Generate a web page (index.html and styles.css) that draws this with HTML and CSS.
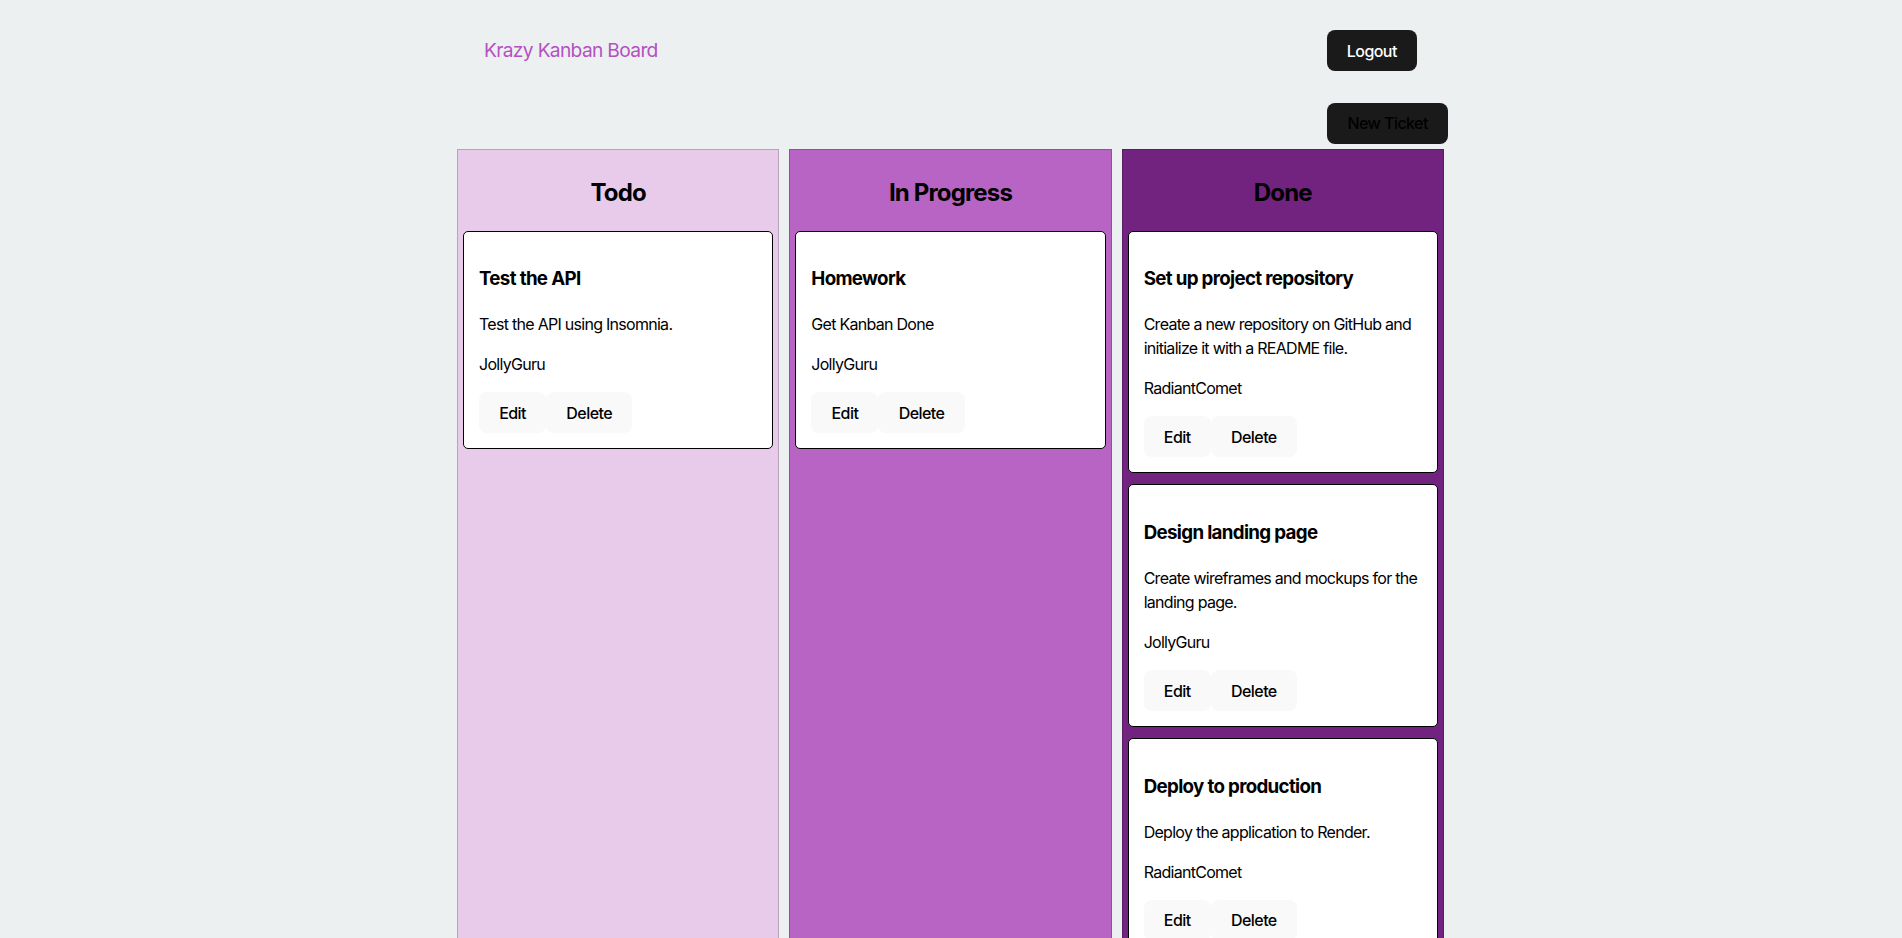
FILE: index.html
```html
<!DOCTYPE html>
<html lang="en">
<head>
<meta charset="utf-8">
<title>Krazy Kanban Board</title>
<link rel="stylesheet" href="styles.css">
</head>
<body>
<div class="page">
  <nav class="nav">
    <a class="nav-title" href="#">Krazy Kanban Board</a>
    <button class="btn btn-dark btn-logout" type="button">Logout</button>
  </nav>
  <main class="board">
    <button class="btn btn-dark btn-new" type="button">New Ticket</button>
    <div class="board-display">
      <section class="swim-lane todo">
        <h2>Todo</h2>
        <div class="ticket-card">
          <h3>Test the API</h3>
          <p>Test the API using Insomnia.</p>
          <p>JollyGuru</p>
          <div class="ticket-actions"><button class="btn btn-light" type="button">Edit</button><button class="btn btn-light" type="button">Delete</button></div>
        </div>
      </section>
      <section class="swim-lane inprogress">
        <h2>In Progress</h2>
        <div class="ticket-card">
          <h3>Homework</h3>
          <p>Get Kanban Done</p>
          <p>JollyGuru</p>
          <div class="ticket-actions"><button class="btn btn-light" type="button">Edit</button><button class="btn btn-light" type="button">Delete</button></div>
        </div>
      </section>
      <section class="swim-lane done">
        <h2>Done</h2>
        <div class="ticket-card">
          <h3>Set up project repository</h3>
          <p>Create a new repository on GitHub and initialize it with a README file.</p>
          <p>RadiantComet</p>
          <div class="ticket-actions"><button class="btn btn-light" type="button">Edit</button><button class="btn btn-light" type="button">Delete</button></div>
        </div>
        <div class="ticket-card">
          <h3>Design landing page</h3>
          <p>Create wireframes and mockups for the landing page.</p>
          <p>JollyGuru</p>
          <div class="ticket-actions"><button class="btn btn-light" type="button">Edit</button><button class="btn btn-light" type="button">Delete</button></div>
        </div>
        <div class="ticket-card">
          <h3>Deploy to production</h3>
          <p>Deploy the application to Render.</p>
          <p>RadiantComet</p>
          <div class="ticket-actions"><button class="btn btn-light" type="button">Edit</button><button class="btn btn-light" type="button">Delete</button></div>
        </div>
      </section>
    </div>
  </main>
</div>
</body>
</html>
```
FILE: styles.css
```css
html {
  font-family: Inter, "Noto Sans", sans-serif;
  line-height: 1.5;
  font-weight: 400;
  color: #000;
}

body {
  margin: 0;
  background: #ecf0f1;
}

.page {
  width: 994px;
  margin: 0 auto;
}

.nav {
  display: flex;
  justify-content: space-between;
  align-items: center;
  padding: 30px 31px 0 30px;
}

.nav-title {
  font-size: 1.2em;
  letter-spacing: -0.035em;
  color: #b450c3;
  text-decoration: none;
  font-weight: 400;
}

.board {
  display: flex;
  flex-direction: column;
  margin-top: 31.5px;
}

.btn {
  border-radius: 8px;
  border: 1px solid transparent;
  padding: 0.6em 1.2em;
  font-size: 1em;
  font-weight: 500;
  font-family: inherit;
  letter-spacing: -0.035em;
  line-height: normal;
  cursor: pointer;
}

.btn-dark {
  background: #1a1a1a;
}

.btn-logout {
  color: #fff;
}

.btn-new {
  align-self: flex-end;
  color: #000;
}

.btn-light {
  background: #f9f9f9;
  color: #000;
}

.board-display {
  display: flex;
  gap: 10px;
  margin: 5px 4px 0 3px;
}

.swim-lane {
  flex: 1;
  min-width: 0;
  border: 1px solid rgba(0, 0, 0, 0.2);
  padding: 5px;
}

.swim-lane h2 {
  text-align: center;
  font-size: 1.5em;
  font-weight: 700;
  letter-spacing: -0.035em;
  margin: 0.83em 0;
}

.todo {
  background: #e8cbea;
}

.inprogress {
  background: #b764c4;
}

.done {
  background: #722380;
}

.ticket-card {
  background: #fff;
  border: 1px solid #000;
  border-radius: 5px;
  padding: 15px;
  margin-bottom: 11px;
}

.ticket-card h3 {
  font-size: 1.17em;
  font-weight: 700;
  letter-spacing: -0.035em;
  margin: 1em 0;
}

.ticket-card p {
  margin: 1em 0;
  letter-spacing: -0.045em;
}

.ticket-actions {
  display: flex;
}
```
